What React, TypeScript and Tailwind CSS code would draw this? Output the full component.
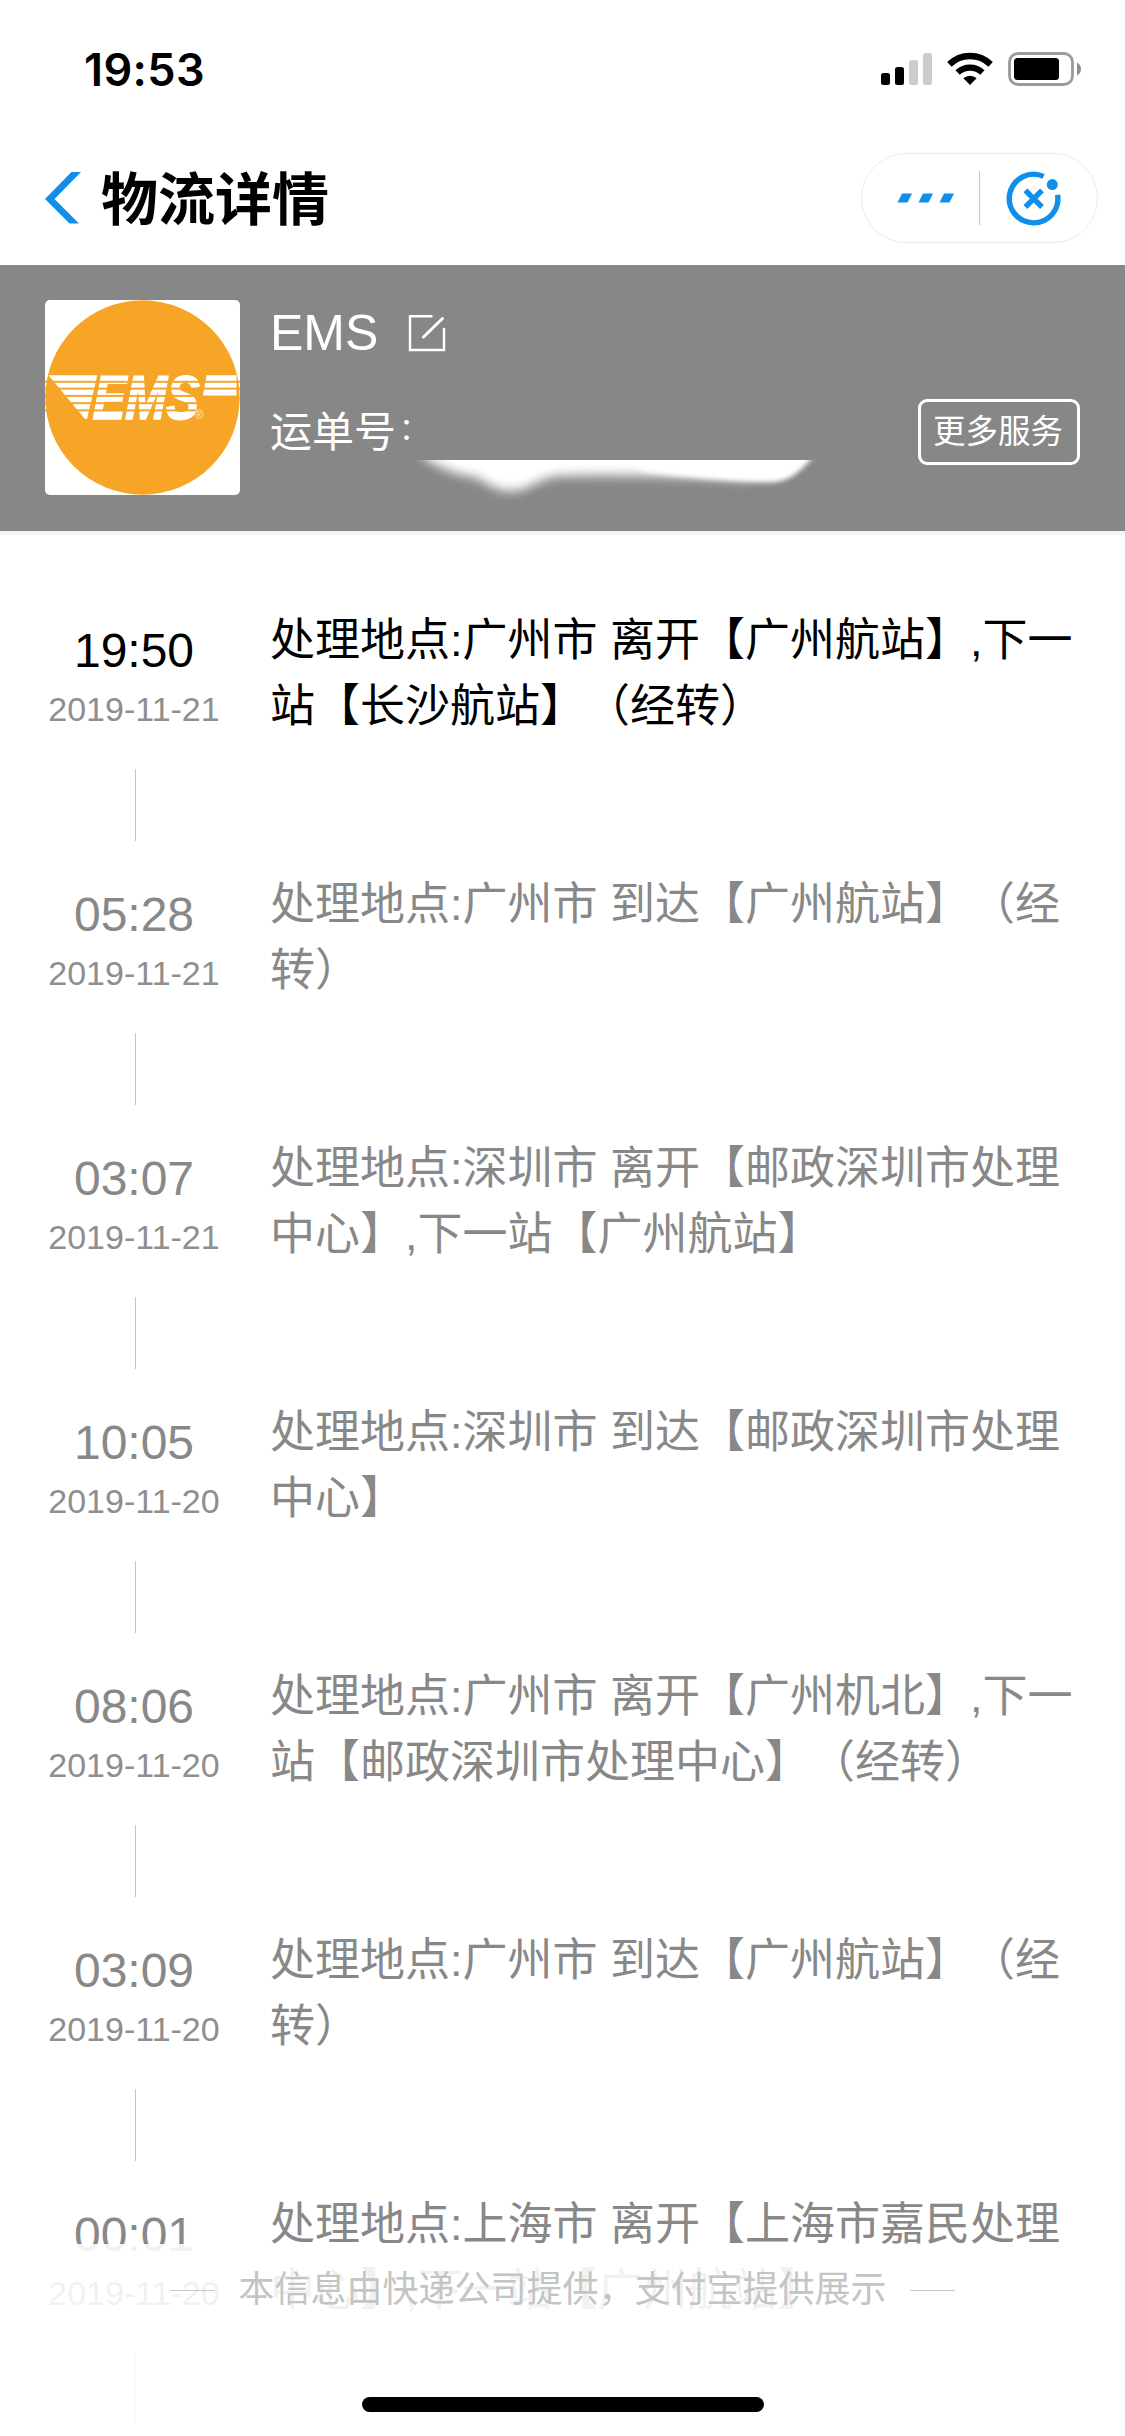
import React from 'react';

interface TrackRecord {
  time: string;
  date: string;
  text: string;
}

const records: TrackRecord[] = [
  { time: '19:50', date: '2019-11-21', text: '处理地点:广州市 离开【广州航站】,下一站【长沙航站】（经转）' },
  { time: '05:28', date: '2019-11-21', text: '处理地点:广州市 到达【广州航站】（经转）' },
  { time: '03:07', date: '2019-11-21', text: '处理地点:深圳市 离开【邮政深圳市处理中心】,下一站【广州航站】' },
  { time: '10:05', date: '2019-11-20', text: '处理地点:深圳市 到达【邮政深圳市处理中心】' },
  { time: '08:06', date: '2019-11-20', text: '处理地点:广州市 离开【广州机北】,下一站【邮政深圳市处理中心】（经转）' },
  { time: '03:09', date: '2019-11-20', text: '处理地点:广州市 到达【广州航站】（经转）' },
  { time: '00:01', date: '2019-11-20', text: '处理地点:上海市 离开【上海市嘉民处理中心】,下一站【广州航站】' },
];

const StatusBar: React.FC = () => (
  <div className="h-[138px] flex justify-between items-start pl-[84px] pr-[43px]">
    <span className="mt-[43px] font-['Inter',sans-serif] font-semibold text-[45px] leading-[54px] tracking-[0.4px]">19:53</span>
    <svg className="mt-[50px]" width="202" height="38" viewBox="880 50 202 38">
      {/* signal */}
      <rect x="881" y="73" width="9" height="12" rx="2.5" />
      <rect x="895" y="67" width="9" height="18" rx="2.5" />
      <rect x="909" y="60" width="9" height="25" rx="2.5" fill="#ccc" />
      <rect x="923" y="53" width="9" height="32" rx="2.5" fill="#ccc" />
      {/* wifi */}
      <g fill="none" stroke="#000">
        <path d="M949.4 64.4A29.5 29.5 0 0 1 990.6 64.4" strokeWidth="6.4" />
        <path d="M957.6 72.6A18 18 0 0 1 982.4 72.6" strokeWidth="6.2" />
      </g>
      <path d="M963.4 78.3A9.6 9.6 0 0 1 976.6 78.3L970 85Z" />
      {/* battery */}
      <rect x="1009.5" y="53.5" width="63" height="31" rx="8.5" fill="none" stroke="#9b9b9b" strokeWidth="2.8" />
      <rect x="1014" y="58" width="45" height="22" rx="3.5" />
      <path d="M1077 62.5C1082.3 65 1082.3 73 1077 75.5Z" fill="#8e8e8e" />
    </svg>
  </div>
);

const TitleBar: React.FC = () => (
  <div className="h-[127px] flex items-start pl-[45px] pr-[27px]">
    <svg className="mt-[34px]" width="36" height="52" viewBox="0 0 36 52">
      <path d="M26.5 0H36L9.5 27L34 51.5H24.5L0 27Z" fill="#108ee9" />
    </svg>
    <h1 className="ml-[20px] mt-[22px] text-[57px] leading-[80px] font-bold">物流详情</h1>
    <div className="ml-auto mt-[15px] w-[237px] h-[90px] rounded-full border border-[#ececec] flex items-center">
      <svg className="ml-[35px]" width="58" height="10" viewBox="0 0 58 10">
        <path d="M5 0.5H15L10.5 9.5H0.5ZM26 0.5H36L31.5 9.5H21.5ZM47 0.5H57L52.5 9.5H42.5Z" fill="#108ee9" />
      </svg>
      <div className="ml-[24px] w-px h-[54px] bg-[#c8c8c8]" />
      <svg className="ml-[26px] mt-[2px]" width="56" height="56" viewBox="0 0 56 56">
        <g fill="none" stroke="#108ee9" strokeWidth="5.4">
          <path d="M37.6 5.4A24.3 24.3 0 1 0 51.6 23.8" />
          <path d="M19.4 19.4L36 36M36 19.4L19.4 36" />
        </g>
        <circle cx="46.3" cy="13.6" r="5.5" fill="#108ee9" />
      </svg>
    </div>
  </div>
);

const EmsLogo: React.FC = () => (
  <svg className="w-[195px] h-[195px] rounded-[5px] bg-white shrink-0" viewBox="0 0 195 195">
    <circle cx="97.5" cy="97.5" r="97.2" fill="#f6a526" />
    <g fill="#fff">
      <path d="M3.5 75.3H52.3L42 119H40Z" />
      <path d="M161.5 75.3H191.5V95.5H158Z" />
      <text
        transform="translate(47.5 118.6) skewX(-2)"
        fontFamily="Liberation Sans, sans-serif"
        fontWeight="bold"
        fontStyle="italic"
        fontSize="62"
        textLength="106"
        lengthAdjust="spacingAndGlyphs"
        stroke="#fff"
        strokeWidth="1.6"
      >
        EMS
      </text>
    </g>
    <g fill="#f6a526">
      <rect y="80.8" width="195" height="2" />
      <rect y="87.6" width="195" height="2" />
      <rect y="94.9" width="155" height="2" />
      <rect y="102.2" width="155" height="2" />
      <rect y="109.4" width="155" height="2" />
    </g>
    <text x="149.5" y="119" fill="#fff" fillOpacity="0.8" fontFamily="Liberation Sans, sans-serif" fontSize="12">®</text>
  </svg>
);

const CourierCard: React.FC = () => (
  <div className="relative h-[270px] bg-[#878787] border-b-[4px] border-[#f5f5f5] text-white flex items-start pl-[45px] pr-[45px] pt-[35px]">
    <EmsLogo />
    <div className="ml-[30px]">
      <div className="flex items-center h-[66px]">
        <span className="text-[50px] leading-[66px]">EMS</span>
        <svg className="ml-[30px]" width="38" height="38" viewBox="0 0 38 38" fill="none" stroke="#fff" strokeWidth="2.4">
          <path d="M23.5 2.2H2V36H36V15" strokeLinecap="round" />
          <path d="M34.5 4.5L15.5 23" strokeWidth="3" strokeLinecap="round" />
        </svg>
      </div>
      <div className="mt-[37px] text-[42px] leading-[60px] flex">
        运单号
        <span className="relative -top-[4px] ml-[3px] text-[30px]">：</span>
      </div>
    </div>
    <button className="ml-auto mt-[99px] w-[162px] h-[66px] rounded-[9px] border-[3px] border-white text-[32.5px] leading-[60px] pr-[2px]">
      更多服务
    </button>
    {/* brushed-out waybill number */}
    <svg className="absolute left-[400px] top-[195px]" width="440" height="60" viewBox="0 0 440 60">
      <defs>
        <filter id="soft" x="-10%" y="-50%" width="120%" height="200%">
          <feGaussianBlur stdDeviation="5.5" />
        </filter>
        <filter id="edge" x="-10%" y="-50%" width="120%" height="200%">
          <feGaussianBlur stdDeviation="2.5" />
        </filter>
      </defs>
      <path
        d="M20 -30L22 -4C38 8 56 14 74 17C86 21 92 30 110 31C130 31 138 18 158 16C220 14 280 17 340 19C366 20 386 14 398 -4V-30Z"
        fill="#fff"
        filter="url(#soft)"
      />
      <path d="M240 -30V10C280 17 330 21 372 22C388 22 400 12 413 -3V-30Z" fill="#fff" filter="url(#edge)" />
    </svg>
  </div>
);

const App: React.FC = () => (
  <div className="relative w-[1125px] h-[2436px] overflow-hidden bg-white text-black font-['Liberation_Sans','Noto_Sans_CJK_SC',sans-serif] [text-spacing-trim:space-all]">
    <StatusBar />
    <TitleBar />
    <CourierCard />

    <div className="pt-[71px]">
      {records.map((record, index) => (
        <div key={index} className={`h-[264px] flex items-start ${index === 0 ? 'text-black' : 'text-[#888]'}`}>
          <div className="w-[270px] shrink-0 flex flex-col items-center">
            <span className="mt-[17px] mr-[2px] text-[48px] leading-[56px]">{record.time}</span>
            <span className="mt-[10px] mr-[2px] text-[34px] leading-[40px] text-[#8e8e8e]">{record.date}</span>
            <div className="mt-[40px] ml-px w-px h-[72px] bg-[#c4c4c4]" />
          </div>
          <p className="mt-[2px] w-[810px] text-[45px] leading-[66px]">{record.text}</p>
        </div>
      ))}
    </div>

    {/* footer over the list */}
    <div className="absolute left-0 bottom-0 w-full h-[192px] bg-white/88">
      <div className="mt-[19px] flex items-center justify-center gap-[23px] text-[36px] leading-[54px] text-[#c4c4c4]">
        <div className="w-[45px] h-px bg-[#c8c8c8]" />
        <span>本信息由快递公司提供，支付宝提供展示</span>
        <div className="w-[45px] h-px bg-[#c8c8c8]" />
      </div>
      <div className="absolute left-[362px] bottom-[24px] w-[402px] h-[15px] rounded-full bg-black" />
    </div>
  </div>
);

export default App;
